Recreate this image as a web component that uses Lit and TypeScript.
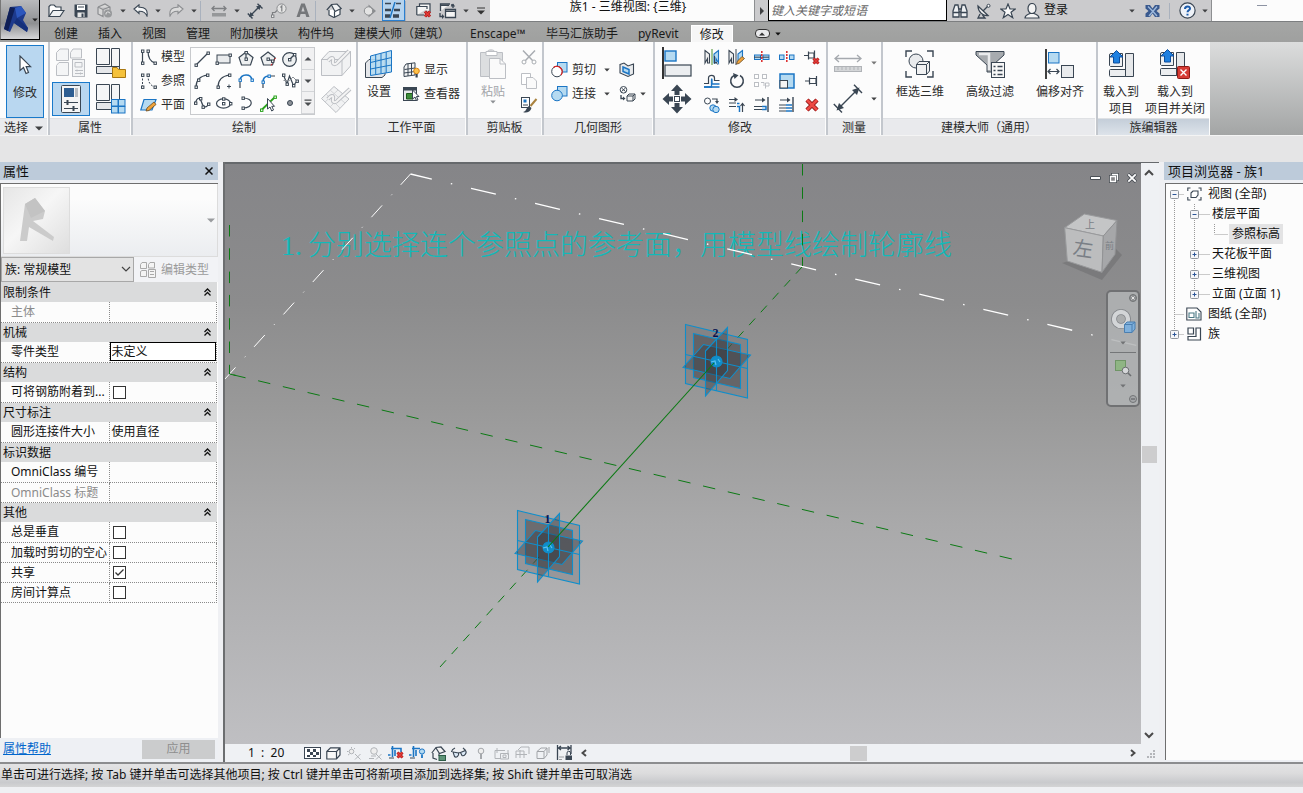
import { LitElement, html, svg, css, nothing, TemplateResult, SVGTemplateResult } from "lit";
import { customElement, state } from "lit/decorators.js";
import { classMap } from "lit/directives/class-map.js";

type Glyph = [number, number, SVGTemplateResult];

const K = "#3a4653";
const G = "#bcbfc4";
const B = "#1b75c4";
const L = "#b5daf1";

const sq = (x: number, y: number, c = K) =>
  svg`<rect x=${x - 1} y=${y - 1} width="2.4" height="2.4" fill="#fff" stroke=${c} stroke-width="1"/>`;

const ln = (d: string, c = K, w = 1.2, fill = "none") =>
  svg`<path d=${d} stroke=${c} stroke-width=${w} fill=${fill}/>`;

const cross = (x: number, y: number, s: number) => svg`
  <path d="M${x} ${y}l${s} ${s}M${x + s} ${y}l${-s} ${s}" stroke="#a31515" stroke-width="3"/>
  <path d="M${x} ${y}l${s} ${s}M${x + s} ${y}l${-s} ${s}" stroke="#e33a36" stroke-width="1.6"/>`;

const loadBox = svg`
  <rect x="1.5" y="19.5" width="24" height="7" rx="1" fill="#eceef0" stroke=${K}/>
  <path d="M1.500 15.500V5Q1.500 3.500 3 3.500H14.500V16.500H2.500Z" fill="#eef0f2" stroke=${K}/>
  <path d="M17.500 3.500H25.500V26.500H17.500Z" fill="#e6e8ea" stroke=${K}/>
  <path d="M8.500 0.500L15 7H11.500V13H5.500V7H2Z" fill="#1e80e0" stroke="#0c4d9c"/>`;

const sheetFamilies = svg`
  <path d="M0.500 0.500H13.500V16.500H0.500ZM15.500 0.500H23.500V19.500H15.500Z" fill="#f4f5f6" stroke=${K}/>
  <path d="M0.500 18.500H23.500V25.500H0.500Z" fill="#e5e7ea" stroke=${K}/>`;

const ICONS: Record<string, Glyph> = {
  open: [17, 14, svg`${ln("M1 12.500V2.500L2.500 1H6L8 3H13V6", K, 1.2, "#fff")}${ln("M1 12.500L5 6.500H16L12 12.500Z", K, 1.2, "#eef0f2")}`],
  save: [14, 14, svg`<path d="M0.500 0.500H13.500V13.500H2L0.500 12Z" fill=${K}/><rect x="3" y="1" width="8" height="5" fill="#fff"/><path d="M4 3h6" stroke=${K}/><rect x="3.500" y="8.500" width="7" height="4.500" fill="#e8e8e8"/><rect x="7.500" y="9.500" width="2" height="3.500" fill=${K}/>`],
  sync: [16, 15, svg`${ln("M1 4L8 1L13 4V7M1 4V11L6 13.500V6.500L13 4M1 4L6 6.500", "#8b8d90", 1.2, "#d6d6d6")}<circle cx="11" cy="10.500" r="4" fill="#97999b"/>${ln("M9 11.500a2 2 0 1 1 4 -1", "#e4e4e4", 1)}`],
  undo: [16, 13, svg`<path d="M1 5L6 0.800V3.300C12 3 15 5.500 14 12C12.500 8.500 10 7 6 7.200V9.500Z" fill="#f6f7f8" stroke=${K} stroke-width="1.100"/>`],
  redo: [16, 13, svg`<path d="M15 5L10 0.800V3.300C4 3 1 5.500 2 12C3.500 8.500 6 7 10 7.200V9.500Z" fill="#dcdcdc" stroke="#8b8d90" stroke-width="1.100"/>`],
  measureQ: [16, 12, svg`${ln("M1 3.500H15M3.500 1L1 3.500L3.500 6M12.500 1L15 3.500L12.500 6", "#7d7f82", 1.3)}<rect x="1" y="8" width="14" height="3.500" fill="#96989a"/>`],
  dim: [16, 16, svg`${ln("M3 13L13 3M0.800 10.500L5.500 15.500M10.500 0.800L15.500 5.500", K, 1.4)}<path d="M2 14L7 12.500L3.500 9ZM14 2L9 3.500L12.500 7Z" fill=${K}/>`],
  tag: [16, 15, svg`<circle cx="10.500" cy="5.500" r="4.600" fill="#e3e3e3" stroke="#8b8d90"/>${ln("M9.500 4.500L10.800 3V8.500M1.500 13V9.500H4L6 7.500", "#7d7f82", 1.2)}${sq(1.5, 13, "#7d7f82")}`],
  textA: [14, 15, svg`<path d="M0.500 14L5.200 0.500H8.800L13.500 14H10.300L9.400 11H4.600L3.700 14ZM5.400 8.500H8.600L7 3.500Z" fill="#75777a" fill-rule="evenodd"/>`],
  home: [16, 15, svg`${ln("M3 7V12L8 14.500L14 11.500V6", K, 1.2, "#fff")}${ln("M0.800 7L5.500 1.500L11 1L15.200 5.500L9 8.500L5.500 2", K, 1.2, "#f1f2f3")}${ln("M8.500 8.500V14", K)}`],
  section: [14, 14, svg`<circle cx="5.500" cy="7" r="4.200" fill="#e3e3e3" stroke="#8b8d90"/><path d="M5.500 0.500L13 7L5.500 13.500V11.200a4.200 4.200 0 0 0 0 -8.400Z" fill="#8b8d90"/>`],
  thin: [18, 16, svg`<path d="M1 1.500H7M12 1.500H17" stroke=${K} stroke-width="1.600"/><path d="M1 8H7M10 8H16" stroke=${K} stroke-width="2.600"/><path d="M1 14H6M9 14H15" stroke=${K} stroke-width="3.600"/><path d="M11 0L6 16" stroke=${B} stroke-width="1.400"/>`],
  closeWin: [16, 15, svg`${ln("M3.500 3V0.800H14V9M0.800 12V3.500H11V6M0.800 12H8", K, 1.2, "#f5f5f5")}${cross(9, 8.5, 5)}`],
  switchWin: [18, 16, svg`${ln("M1.500 8V1H11M6.500 6.500H16.500V14.500H6.500Z", K, 1.3, "#f5f5f5")}${ln("M6.500 8.200H16.500M1.500 2.200H10", K, 1.6)}${ln("M14 5V2H12M1 10V13.500H4", K, 1.3)}<path d="M11.800 3.500L14 0.500L16.200 3.500ZM3 11L5.500 13.500L3 16Z" fill=${K}/>`],
  binoc: [16, 16, svg`${ln("M1 8L3 2H6L7 8V14H1ZM15 8L13 2H10L9 8V14H15Z", K, 1.3, "#eef0f2")}${ln("M7 6H9M7 9H9M1 9.500H7M9 9.500H15", K, 1.3)}`],
  dish: [16, 16, svg`${ln("M2 3C2 9 7 13 12 12.500Z", K, 1.3, "#f4f4f4")}${ln("M7 8L12 3M4 11L2 15H9L6.500 12", K, 1.3)}<circle cx="12.500" cy="2.800" r="1.500" fill="#fff" stroke=${K}/>`],
  star: [16, 16, svg`${ln("M8 1L10 6H15.200L11 9.300L12.700 14.700L8 11.400L3.300 14.700L5 9.300L0.800 6H6Z", K, 1.2, "#f9f9f9")}`],
  user: [16, 16, svg`<ellipse cx="8" cy="5.500" rx="4" ry="5" fill="#f4f4f4" stroke=${K} stroke-width="1.200"/>${ln("M1 15C1 12 4 11.500 6 10.500H10C12 11.500 15 12 15 15Z", K, 1.2, "#f4f4f4")}`],
  exchange: [15, 14, svg`<path d="M0.500 1H5L7.500 4.500L10 1H14.500V4.500L11.500 7L14.500 9.500V13H10L7.500 9.500L5 13H0.500V9.500L3.500 7L0.500 4.500Z" fill="#39598e"/><path d="M3 2.500L8 7.500L12 12M12 2.500L4 12" stroke="#9db9dc" stroke-width="1.400"/>`],
  help: [17, 17, svg`<circle cx="8.500" cy="8.500" r="7.600" fill="#eef2f8" stroke=${K} stroke-width="1.200"/>${ln("M6 7C6 3.500 11.300 3.700 11 6.700C10.800 8.300 8.500 8.400 8.500 10.300M8.500 11.800V13.500", "#1d5caa", 2)}`],
  cursor: [13, 20, svg`<path d="M1 1V15.500L4.500 12.500L7 18.500L9.500 17.500L7.200 11.700H11.700Z" fill="#fff" stroke=${K} stroke-width="1.200"/>`],
  typeProps: [30, 30, svg`<g fill="#f4f5f6" stroke=${G}><path d="M0.500 4.500L4 1H12.500V12.500H0.500ZM14.500 4.500L17 1H25.500V10H14.500ZM0.500 17.500L3 14.500H12.500V27.500H0.500Z"/><rect x="16.500" y="11.500" width="12" height="17"/><path d="M19 14.500H26V19H19ZM19 22.500H27M19 25.500H27M21 21.500v2M24.500 24.500v2"/></g>`],
  famTypes: [30, 30, svg`${sheetFamilies}<path d="M16.500 19.500H21L22.500 21.500H29.500V29.500H16.500Z" fill="#f5c23c" stroke="#a97812"/>`],
  props: [20, 28, svg`<rect x="0.500" y="0.500" width="19" height="27" rx="1" fill="#f5f5f5" stroke=${K}/><rect x="3" y="3" width="10" height="9" fill="#2e5e92"/><rect x="14" y="3" width="3" height="9" fill="#b9bdc2"/><path d="M3 17.500H17M3 23.500H17" stroke=${K}/><path d="M6.500 15V20M12.500 21V26" stroke=${K} stroke-width="2"/>`],
  famCat: [30, 30, svg`${sheetFamilies}<g fill=${L} stroke=${B}><rect x="15.500" y="15.500" width="6.500" height="6.500"/><rect x="22.500" y="15.500" width="6.500" height="6.500"/><rect x="15.500" y="22.500" width="6.500" height="6.500"/><rect x="22.500" y="22.500" width="6.500" height="6.500"/></g>`],
  modelLine: [17, 16, svg`${ln("M2.500 2V14M8 2C8 9 10 12.500 15 14", K)}${sq(2.5, 2)}${sq(2.5, 14)}${sq(8, 2)}${sq(15, 14)}`],
  refLine: [17, 16, svg`<path d="M2.500 2V14M8 2C8 9 10 12.500 15 14" fill="none" stroke=${K} stroke-dasharray="2 1.500"/>${sq(2.5, 2)}${sq(2.5, 14)}${sq(8, 2)}${sq(15, 14)}`],
  refPlane: [17, 16, svg`${ln("M4 2.500H16L12 13H0.800Z", B, 1.2, L)}<path d="M6 14L7 11L14 5L16 7.500L9 13.500Z" fill="#f0a33a" stroke="#6b4a20" stroke-width="0.800"/>`],
  dLine: [18, 18, svg`${ln("M3 15L15 3")}${sq(3, 15)}${sq(15, 3)}`],
  dRect: [18, 18, svg`<rect x="2" y="5" width="13" height="8" fill="#e9ebed" stroke=${K}/>${sq(2, 13)}${sq(15, 5)}`],
  dPoly: [18, 18, svg`${ln("M9 2L16 7.500L13.500 15H4.500L2 7.500Z", K, 1.2, "#eef0f1")}${ln("M9 3V9")}${sq(9, 9)}${sq(9, 2.5)}`],
  dPolyC: [18, 18, svg`${ln("M9 2L16 7.500L13.500 15H4.500L2 7.500Z", K, 1.2, "#eef0f1")}<path d="M14 12L16.500 8M12 15.500L14.500 11" stroke="#e02020" stroke-dasharray="2 1"/>${ln("M9 9L13.500 11")}${sq(9, 9)}${sq(13.5, 11)}`],
  dCircle: [18, 18, svg`<circle cx="8.500" cy="9.500" r="6.800" fill="#eef0f1" stroke=${K} stroke-width="1.200"/>${ln("M9 9L13 5")}${sq(8.5, 9.5)}${sq(13.5, 4.5)}`],
  dArc1: [18, 18, svg`${ln("M3 15C3 8 7 4 14.500 3")}${sq(3, 15)}${sq(5.5, 8)}${sq(14.5, 3)}`],
  dArc2: [18, 18, svg`${ln("M3 15C3 8 7 4 14.500 3")}${sq(3, 15)}${sq(14.5, 3)}${ln("M12 14.500h4M14 12.500v4", K, 1)}`],
  dArc3: [18, 18, svg`${ln("M3 8C4 1.500 14 1 15 8", B, 1.6)}${ln("M3 10V16")}${sq(3, 8, B)}${sq(15, 8, B)}`],
  dArc4: [18, 18, svg`${ln("M4 10C4 6 6 4 10 4", B, 1.6)}${ln("M4 12V16M12 4H16")}${sq(4, 10, B)}${sq(10, 4, B)}`],
  dSpline: [18, 18, svg`${ln("M2.500 3L6 12L8.500 4L12.500 13.500L16 9")}${ln("M2.500 8.500H8.500L12 5L16 9", "#8d9298", 1)}${sq(2.5, 3)}${sq(6, 12)}${sq(12.5, 13.5)}${sq(16, 9)}`],
  dSpline2: [18, 18, svg`${ln("M2.500 9C4 3 7 3 8.500 8S13 15 15.500 10")}${sq(2.5, 9)}${sq(7.5, 4.5)}${sq(10, 13)}${sq(15.5, 10)}`],
  dEllipse: [18, 18, svg`<ellipse cx="8.500" cy="9.500" rx="7" ry="4.600" fill="#fff" stroke=${K} stroke-width="1.200"/>${sq(8.5, 9.5)}${sq(8.5, 4.8)}${sq(15.5, 9.5)}`],
  dEllipse2: [18, 18, svg`${ln("M6 4C17 4 17 14 6 14")}${sq(6, 4)}${sq(6, 14)}`],
  dPick: [18, 18, svg`${ln("M2.500 16L16 3", "#2aa31c", 1.8)}${sq(2.5, 16, "#2aa31c")}${sq(16, 3, "#2aa31c")}<path d="M8.500 4.500V15L11 13L12.700 17L14.500 16L12.800 12.300H15.500Z" fill="#fff" stroke=${K}/>`],
  dPoint: [18, 18, svg`<circle cx="9" cy="9" r="2.500" fill="#8d9298" stroke=${K}/>`],
  faceDraw: [32, 30, svg`<path d="M1.500 11.500L9 3.500H30.500L22 11.500ZM1.500 11.500H22V27.500H1.500ZM22 11.500L30.500 3.500V18L22 27.500" fill="#f1f2f3" stroke=${G}/><path d="M8 13C11 9 14 9 13 13S16 17 18 14L29 3" fill="none" stroke=${G} stroke-width="4"/><path d="M8 13C11 9 14 9 13 13S16 17 18 14L29 3" fill="none" stroke="#f4f4f4" stroke-width="2"/>`],
  planeDraw: [32, 30, svg`<path d="M1.500 14.500L14 2.500L29 15L16 28.500Z" fill="#f1f2f3" stroke=${G}/><path d="M6 10L20 24M10 6L25 19M10 23L23 10M5 18L18 6" stroke="#d3d5d8"/><path d="M8 15C11 11 14 11 13 15S16 19 18 16L30 5" fill="none" stroke=${G} stroke-width="4"/><path d="M8 15C11 11 14 11 13 15S16 19 18 16L30 5" fill="none" stroke="#f4f4f4" stroke-width="2"/>`],
  setPlane: [28, 30, svg`<path d="M0.500 14L4 10.500H20V26L17 28.500H0.500Z" fill="#e4e6e9" stroke=${K}/><path d="M5.500 7L26.500 1.500V23L5.500 26.500Z" fill=${L} fill-opacity="0.900" stroke=${B}/><path d="M5.500 13.500L26.500 8.500M5.500 20L26.500 16M10.700 5.700V25.600M16 4.300V24.700M21.200 3V23.900" stroke=${B}/>`],
  showPlane: [17, 16, svg`${ln("M3 2L12 0.800V13L1 14.500V5Z", K, 1, "#f2f3f4")}${ln("M1.500 7.500L12 6M1 11L12 9.500M5 1.500V14M8.500 1V13.500", K, 1)}<circle cx="13.500" cy="9" r="2.800" fill="#ffc24a" stroke="#d98413"/><rect x="12.500" y="12" width="2.200" height="3.500" fill=${K}/>`],
  viewer: [17, 16, svg`<rect x="0.500" y="1.500" width="13" height="13" fill="#e8eaec" stroke=${K}/><path d="M0.500 3H14" stroke=${K} stroke-width="3"/><path d="M3.500 7.500H10V13H3.500Z" fill="#3e8d3a" stroke="#1e5c1b"/><path d="M9.500 4V13L12 11L13.500 14.500L15 14L13.500 10.500H16Z" fill="#fff" stroke=${K}/>`],
  paste: [27, 32, svg`<path d="M0.500 4.500H7C7 1 15 1 15 4.500H22.500V28.500H0.500Z" fill="#dcdee0" stroke=${G}/><path d="M6 3.500H17V7.500H6Z" fill="#fff" stroke=${G}/><path d="M9.500 10.500H20L25.500 16V30.500H9.500Z" fill="#fafafa" stroke=${G}/><path d="M20 10.500V16H25.500" fill="none" stroke=${G}/>`],
  cut: [16, 16, svg`${ln("M2 1.500L12 12M14 1.500L4 12", "#a9adb2", 1.5)}<circle cx="3" cy="13" r="2" fill="#fff" stroke="#a9adb2"/><circle cx="13" cy="13" r="2" fill="#fff" stroke="#a9adb2"/>`],
  copy: [16, 16, svg`<path d="M0.500 0.500H9.500V11.500H0.500Z" fill="#fff" stroke=${G}/><path d="M5.500 4.500H12L15.500 8V15.500H5.500Z" fill="#fafafa" stroke=${G}/>`],
  match: [17, 16, svg`<rect x="0.500" y="0.500" width="8" height="10" fill="#fff" stroke=${K}/><rect x="2.500" y="2.500" width="3" height="3" fill=${B}/><path d="M2 8h5" stroke=${K}/><path d="M15.500 2L9.500 9" stroke="#a9823e" stroke-width="2"/><path d="M2 15C5 15 5 11 8 9L10.500 11C9.500 15 5 16.500 2 15Z" fill=${K}/>`],
  cutGeo: [17, 16, svg`<rect x="6.500" y="0.500" width="9.500" height="9.500" fill=${L} stroke=${B}/><circle cx="6" cy="9.500" r="5.300" fill="#fff" stroke=${K}/><path d="M2.500 5.600A5.300 5.300 0 0 1 10 13" fill="none" stroke="#d22" stroke-width="1.300"/>`],
  joinGeo: [17, 16, svg`<rect x="6.500" y="0.500" width="9.500" height="9.500" fill=${L} stroke=${B}/><circle cx="6" cy="9.500" r="5.300" fill=${L} stroke=${B}/><path d="M7 5.500V9H10.500" fill="none" stroke=${L} stroke-width="1.500"/>`],
  paintGeo: [16, 16, svg`${ln("M1 2.500L5 1L9 4L14.500 2V12L9 14.500L1 11Z", K, 1.1, "#e9ebed")}<path d="M4 5L10 7.500V12L4 9.500Z" fill=${L} stroke=${B} stroke-width="1.500"/>`],
  demolish: [17, 16, svg`<circle cx="4.500" cy="3.800" r="3.300" fill="#fff" stroke=${K}/>${ln("M2.500 2L6.500 5.500M6.500 2L2.500 5.500", K, 1)}${ln("M8 10L10 8H16V13L14 15H8ZM8 10H14V15M14 10L16 8", K, 1, "#f4f4f4")}${ln("M2 9V12.500H5", K, 1.3)}<path d="M4 10.500L6.500 12.500L4 14.500Z" fill=${K}/>`],
  align: [30, 32, svg`<path d="M1 0V32" stroke="#000" stroke-width="1.600"/><rect x="3" y="4" width="11" height="10" fill=${L} stroke=${B} stroke-width="1.400"/><rect x="3" y="18" width="26" height="11" fill="#eceef0" stroke=${K} stroke-width="1.200"/>`],
  move: [30, 30, svg`<path d="M15 0.500L21 7H17.500V11H12.500V7H9ZM15 29.500L21 23H17.500V19H12.500V23H9ZM0.500 15L7 9V12.500H11V17.500H7V21ZM29.500 15L23 9V12.500H19V17.500H23V21Z" fill=${K}/><rect x="12.500" y="12.500" width="5" height="5" fill="#fff" stroke=${K}/>`],
  mirrorP: [16, 16, svg`${ln("M1 1.500L5.500 5V14H3.500V9.500L1 14Z", K, 1.1, "#f2f2f2")}${ln("M8 0V16", "#63a24d", 1.2)}${ln("M14.500 1.500L10 5V14H12V9.500L14.500 14Z", B, 1.1, L)}${ln("M10.500 7V14.500L12.200 13L13.500 15.500", K, 1)}`],
  mirrorD: [17, 16, svg`${ln("M1 1.500L5.500 5V14H3.500V9.500L1 14Z", K, 1.1, "#f2f2f2")}${ln("M8 0V16", K, 1)}${ln("M14.500 1.500L10 5V12H12L14.500 9Z", B, 1.1, L)}<path d="M8.500 15L9.500 12L14 7.500L16.500 9.500L11 14.500Z" fill="#f0a33a" stroke="#6b4a20" stroke-width="0.800"/>`],
  split: [16, 16, svg`<rect x="0.500" y="6" width="6" height="4.500" fill=${L} stroke=${B}/><rect x="9" y="6" width="6" height="4.500" fill=${L} stroke=${B}/><path d="M0 8.200H15" stroke=${K}/><path d="M7.800 2V14" stroke="#d33" stroke-width="1.600" stroke-dasharray="2 1"/>`],
  splitGap: [16, 16, svg`<rect x="0.500" y="6" width="4.500" height="4.500" fill=${L} stroke=${B}/><rect x="10.500" y="6" width="4.500" height="4.500" fill=${L} stroke=${B}/><path d="M7.800 2V14" stroke="#d33" stroke-width="1.600" stroke-dasharray="2 1"/>`],
  unpin: [16, 16, svg`${ln("M0 6.500H4M4.500 2.500V10.500M5 4H10V9H5M10.500 1.500V11", K, 1.2)}${cross(9.5, 9.5, 5)}`],
  offset: [17, 16, svg`${ln("M1 10.500H5.500V5C5.500 1.500 11.500 1.500 11.500 5V7.500H16.500", K, 1.2)}${ln("M1 14H8.500V7C8.500 5.500 9 5.500 9 7V11H16.500", B, 1.3)}${ln("M1 14H16.500", B, 1.6)}`],
  rotate: [16, 16, svg`<path d="M5 2.500A6.300 6.300 0 1 0 11 2.500" fill="none" stroke=${K} stroke-width="1.500"/><path d="M4 0L9.500 2.300L5.500 6Z" fill=${K}/>`],
  array: [16, 16, svg`<g fill="#fff" stroke=${G}><rect x="0.500" y="1.500" width="4" height="4"/><rect x="8.500" y="1.500" width="4" height="4"/><rect x="0.500" y="9.500" width="4" height="4"/><path d="M7 9.500H10V13M11.500 15.500V10H15V13H11.500"/></g>`],
  scale: [16, 16, svg`<rect x="1" y="1" width="14" height="14" fill=${L} stroke=${B} stroke-width="1.500"/><rect x="1" y="7.500" width="7.500" height="7.500" fill="#f4f4f4" stroke=${K}/>`],
  pin: [16, 16, svg`${ln("M1 8H5M5.500 4.500V11.500M6 5.500H12V10.500H6M12.500 3V13", K, 1.2)}`],
  copyObj: [16, 16, svg`<circle cx="3.500" cy="4" r="3" fill="#fff" stroke=${K}/><circle cx="9" cy="11" r="3.200" fill=${L} stroke=${B}/><circle cx="12" cy="12.500" r="3.200" fill=${L} stroke=${B}/>${ln("M8 2H13V4.500", K, 1.2)}<path d="M11 4L15 4L13 7Z" fill=${K}/>`],
  trim: [16, 16, svg`${ln("M0 2.500H7M0 6H7M0 9.500H7", K, 1.2)}<path d="M5.500 0L9 2.500L5.500 5Z" fill=${K}/>${ln("M8 9.500H10.500V15M8 6.500H10.500", B, 1.5)}${ln("M13.500 15V7M11.500 9L13.500 6.500L15.500 9", K, 1.2)}`],
  trimOne: [16, 16, svg`${ln("M1 3H10M0 9.500H8M0 12.500H8", K, 1.2)}<path d="M8 0.500L11.500 3L8 5.500Z" fill=${K}/>${ln("M8 9.500H12V12.500H8", B, 1.5)}${ln("M14 0V15", K, 1.4)}`],
  trimMany: [16, 16, svg`${ln("M1 3H10M0 8H7M0 11H7M0 14H7", K, 1.2)}<path d="M8 0.500L11.500 3L8 5.500Z" fill=${K}/>${ln("M7 8H13M7 11H13M7 14H13", B, 1.5)}${ln("M14 0V15", K, 1.4)}`],
  del: [14, 14, svg`<path d="M2 2L12 12M12 2L2 12" stroke="#8e1414" stroke-width="4.500"/><path d="M2 2L12 12M12 2L2 12" stroke="#ee4a45" stroke-width="2.800"/>`],
  ruler: [30, 22, svg`${ln("M2 6.500H28M6 3L2 6.500L6 10M24 3L28 6.500L24 10", "#a5a9ae", 1.3)}<rect x="1.500" y="14.500" width="27" height="5" fill="#d4d6d8" stroke="#b0b3b7"/><path d="M5 15v3M9 15v3M13 15v3M17 15v3M21 15v3M25 15v3" stroke="#b0b3b7"/>`],
  dimBig: [30, 30, svg`${ln("M5 25L25 5M0.800 20L9 28.500M21 0.800L29 9", K, 1.4)}<path d="M3.500 26.500L11 24L6 19ZM26.500 3.500L19 6L24 11Z" fill=${K}/>`],
  box3d: [30, 28, svg`${ln("M1 7V1H7M22 1H28V7M28 21V27H22M7 27H1V21", K, 1.4)}<circle cx="11" cy="11" r="7" fill="#e9ebed" stroke=${K}/><path d="M11.500 14.500L14 11.500H24.500V21L21.500 24.500H11.500ZM11.500 14.500H21.500V24.500M21.500 14.500L24.500 11.500" fill="#f0f1f2" stroke=${K}/>`],
  filter: [30, 28, svg`<path d="M1 1.500H29V5L18 15V22H12V15L1 5Z" fill="#a7abaf" stroke=${K}/><path d="M4 4H14V20" fill="none" stroke="#e9ebed" stroke-width="2.500"/><rect x="16.500" y="12.500" width="13" height="15" fill="#f7f7f7" stroke=${K}/>${ln("M18.500 16.500h2M18.500 20.500h2M18.500 24.500h2M22.500 16.500h5M22.500 20.500h5M22.500 24.500h5", K, 1.3)}`],
  offAlign: [30, 30, svg`<path d="M1 0V30" stroke="#000" stroke-width="1.500"/><rect x="3.500" y="3.500" width="10.500" height="10.500" fill=${L} stroke=${B}/><rect x="16.500" y="16.500" width="12" height="12" fill="#e9ebed" stroke=${K}/>${ln("M3 22.500H14M5.500 20L3 22.500L5.500 25M11.500 20L14 22.500L11.500 25", K, 1.2)}`],
  load: [27, 28, loadBox],
  loadClose: [32, 31, svg`${loadBox}<rect x="18.500" y="17.500" width="12" height="12" rx="1" fill="#d63b34" stroke="#8c1a16"/><path d="M21.500 20.500l6 6M27.500 20.500l-6 6" stroke="#fff" stroke-width="1.400"/>`],
  editType: [16, 16, svg`<g fill="#f4f4f4" stroke="#a9a9a9"><path d="M0.500 2.500L2 0.500H6.500V6.500H0.500ZM8.500 2.500L10 0.500H14.500V6H8.500ZM0.500 9.500L2 8.500H6.500V14.500H0.500Z"/><path d="M8.500 7.500H15.500V15.500H8.500ZM10 9.500H14M10 12.500H14"/></g>`],
  vDetail: [17, 12, svg`<rect x="0.500" y="0.500" width="16" height="11" fill="#fff" stroke=${K}/><path d="M3 2h3v3H3ZM9 2h3v3H9ZM6 5h3v3H6ZM12 5h3v3H12ZM3 8h3v2H3ZM9 8h3v2H9Z" fill=${K}/>`],
  vStyle: [15, 13, svg`${ln("M0.800 4.500L4.500 0.800H14V8L10.500 12H0.800ZM0.800 4.500H10.500V12M10.500 4.500L14 0.800", K, 1.2, "#f8f8f8")}`],
  vSun: [15, 13, svg`<g stroke="#b1b4b8"><circle cx="4.500" cy="4.500" r="2.300" fill="#eee"/><path d="M4.500 0V1.500M0 4.500H1.500M1 8L2.500 7M8 1L7 2M8 7L13.500 12.500M13.500 7L8 12.500"/></g>`],
  vShadow: [15, 13, svg`<g stroke="#b1b4b8"><circle cx="6" cy="4" r="3.300" fill="#eee"/><path d="M1 11.500H6M3 9H8M8 7L13.500 12.500M13.500 7L8 12.500" fill="none"/></g>`],
  vCrop: [17, 14, svg`${ln("M4.500 0V11M0 9H2.500M3 2.500H13V6M7 4V10M13 3V5", B, 1.6)}<path d="M1 12h5" stroke=${K}/>${cross(9.5, 6.5, 5)}`],
  vCropShow: [17, 14, svg`${ln("M4.500 0V11M0 9H2.500M3 2.500H11M7 4V10", B, 1.6)}<path d="M1 12h5" stroke=${K}/><circle cx="13" cy="5.500" r="2.600" fill=${L} stroke=${B}/><path d="M13 8.500V12" stroke=${B} stroke-width="1.800"/>`],
  vLock: [16, 15, svg`${ln("M2 7V12L6 13.500M0.800 7L5 1.500L10 1L14 5.500L8.500 7.500L5 2M8 7.500V10", K, 1.2, "#f3f3f3")}<rect x="8" y="9.500" width="6.500" height="5" fill="#5e9478" stroke="#2c5c46"/>`],
  vGlasses: [17, 12, svg`<path d="M2 5L7.500 6C8.500 9 5 11 3.500 9.500ZM9.500 5.500L14.500 3.500C16.500 6 13 9.500 11 8.500Z" fill="#dbe9f6" stroke=${K} stroke-width="1.100"/>${ln("M0.500 5C1 2 3 1.500 4 1M7.500 6L9.500 5.500M14.500 3.500L12 0.800", K, 1.2)}`],
  vBulb: [8, 13, svg`<circle cx="4" cy="4" r="2.800" fill="#eee" stroke="#a5a8ac"/><path d="M4 7V12" stroke="#a5a8ac" stroke-width="2"/>`],
  vTemp: [16, 13, svg`<path d="M1 3.500H11M1 3.500V11.500H6M3 1V6M14 3V8M6.500 6.500H14.500V12H6.500ZM9 8h3v2.500H9Z" fill="none" stroke="#b1b4b8"/>`],
  vAnalytic: [16, 14, svg`<path d="M3 4L6 1H14V8M1 12V5H9V12M1 8.500H12M5 4V12" fill="none" stroke="#b1b4b8"/>`],
  vDisp: [16, 14, svg`<path d="M1 5.500L5 2H11M1 5.500V12.500H8V5.500H1M8 5.500L11 2V9L8 12.500M13 1V7" fill="none" stroke="#a1a4a8"/>`],
  vConstr: [17, 16, svg`${ln("M1.500 0V15M15 0V9M3 3H13.500M5 1L2.500 3L5 5M11.500 1L14 3L11.500 5", K, 1.3)}<rect x="9.500" y="10.500" width="6.500" height="4.500" fill=${K}/><path d="M11 10V8a1.700 1.700 0 0 1 3.500 0V10" fill="none" stroke=${K}/><path d="M3 12h5M3 14.500h3" stroke="#9a9da1"/>`],
  views: [15, 14, svg`${ln("M0.800 4V1H3.500M11.500 1H14V4M14 10V13H11.500M3.500 13H0.800V10", K, 1.1)}${ln("M4 6L6 4H11V8L9 10.500H4Z", K, 1.1, "#fff")}`],
  sheets: [16, 14, svg`${ln("M0.800 1H11L15 5V13H0.800Z", K, 1.1, "#fff")}${ln("M3 10.500V6H8V10.500ZM10 4V11H13V6", "#4d7a86", 1.1)}`],
  families: [15, 14, svg`${ln("M1 1H6.500V7H1ZM9 1H13.500V13H1V9.500H9Z", K, 1.2, "#fff")}`],
  resize: [8, 8, svg`<path d="M6 0h2v2H6ZM3 3h2v2H3ZM6 3h2v2H6ZM0 6h2v2H0ZM3 6h2v2H3ZM6 6h2v2H6Z" fill="#b4b6ba"/>`],
  logo: [26, 27, svg`<path d="M7 1L18 0L23 7L20 14L25 22L24 26L11 17L7 26L1 23Z" fill="#1d3a8c"/><path d="M7 1L12 2L5 25L1 23Z" fill="#0f1f55"/><path d="M12 2L18 0L23 7L14 12Z" fill="#2c57bd"/><path d="M11 17L14 12L25 22L24 26Z" fill="#15307a"/>`],
  logoPale: [36, 46, svg`<path d="M6 7L16 1L26 14L24 22L14 24L35 40L34 44L10 30L8 44L1 44Z" fill="#cbcbcb"/><path d="M6 7L16 1L26 14L12 21Z" fill="#c3c3c3"/>`],
};

const icon = (name: string) => {
  const [w, h, body] = ICONS[name];
  return html`<svg width=${w} height=${h} viewBox="0 0 ${w} ${h}" fill="none" aria-hidden="true">${body}</svg>`;
};

const down = (c = "#3f4042") =>
  html`<svg width="6" height="4" viewBox="0 0 6 4" aria-hidden="true"><path d="M0.300 0.500H5.700L3 3.600Z" fill=${c}/></svg>`;

const chevron = (d: string) =>
  html`<svg width="10" height="10" viewBox="0 0 10 10" fill="none" aria-hidden="true"><path d=${d} stroke="#4a4a4a" stroke-width="2"/></svg>`;

interface PropRow { name: string; kind: "text" | "edit" | "check"; value?: string; on?: boolean; dim?: boolean }
interface PropGroup { title: string; rows: PropRow[] }

const GROUPS: PropGroup[] = [
  { title: "限制条件", rows: [{ name: "主体", kind: "text", dim: true }] },
  { title: "机械", rows: [{ name: "零件类型", kind: "edit", value: "未定义" }] },
  { title: "结构", rows: [{ name: "可将钢筋附着到...", kind: "check" }] },
  { title: "尺寸标注", rows: [{ name: "圆形连接件大小", kind: "text", value: "使用直径" }] },
  { title: "标识数据", rows: [{ name: "OmniClass 编号", kind: "text" }, { name: "OmniClass 标题", kind: "text", dim: true }] },
  { title: "其他", rows: [
    { name: "总是垂直", kind: "check" },
    { name: "加载时剪切的空心", kind: "check" },
    { name: "共享", kind: "check", on: true },
    { name: "房间计算点", kind: "check" },
  ] },
];

const base = css`
  :host { display: block; box-sizing: border-box; }
  * { box-sizing: border-box; }
  button, input, select { font: inherit; color: inherit; margin: 0; }
  button { background: none; border: 0; padding: 0; display: flex; align-items: center; justify-content: center; white-space: nowrap; }
  svg { display: block; flex: none; }
`;

@customElement("title-bar")
class TitleBar extends LitElement {
  static styles = [base, css`
    :host { display: flex; background: linear-gradient(#9b9c9d, #a5a6a5 50%, #9fa09f); height: 42px; }
    .app { width: 40px; height: 40px; flex: none; border: 1px solid #000; border-left-color: #777; border-top: 0; background: linear-gradient(#b9babc, #8e9092 60%, #d5d6d8); gap: 3px; }
    .col { flex: 1; min-width: 0; }
    .top { display: flex; height: 22px; border-bottom: 1px solid #7c7e80; background: #fcfcfc; }
    .qat { display: flex; padding-left: 5px; background: #cbcbcd; width: 450px; flex: none; }
    .qat button { width: 24px; height: 21px; }
    .qat .drop { width: 12px; }
    .qat .sep { width: 7px; border-left: 1px solid #a9b1bd; margin-top: 1px; }
    .qat .on { background: #b5d3ee; border: 1px solid #2a7fd0; border-top: 0; }
    .qat .more { width: 18px; flex-direction: column; gap: 2px; }
    .name { flex: 1; text-align: center; line-height: 14px; padding-left: 12px; white-space: nowrap; }
    .info { display: flex; align-items: center; width: 458px; flex: none; background: #cbcbcd; border-left: 1px solid #8d8f91; border-right: 1px solid #8d8f91; }
    .info button { width: 24px; height: 21px; flex: none; }
    .info .go { width: 13px; }
    .info input { flex: 1; min-width: 0; height: 21px; border: 1px solid #000; border-top: 0; border-radius: 0; background: #fff; font-style: italic; padding: 0 2px; line-height: 18px; margin-right: 1px; }
    .info input::placeholder { color: #666; opacity: 1; }
    .info .login { width: 82px; justify-content: flex-start; padding-bottom: 1px; }
    .info .drop { width: 12px; }
    .info .drop.gap { margin-right: 2px; }
    .info .sep { width: 1px; height: 16px; background: #a9b1bd; margin: 0 5px; }
    .win { width: 91px; flex: none; display: flex; padding: 5px 0 0 45px; align-items: flex-start; }
    .win i { width: 10px; height: 1px; background: #8d93a3; }
    .tabs { display: flex; padding: 3px 0 0 4px; height: 20px; align-items: stretch; }
    .tabs button { padding: 0 10px; line-height: 17px; color: #1a1a1a; }
    .tabs .sel { background: #f6f6f6; padding: 0 8px; margin-left: 2px; border: 1px solid #fff; border-bottom: 0; }
    .tabs .fold { padding: 0; margin-left: 22px; gap: 5px; }
    .oval { width: 15px; height: 9px; border: 1px solid #333; border-radius: 4px; background: #e9eaec; display: flex; align-items: center; justify-content: center; }
  `];

  @state() private tab = "修改";

  render() {
    const b = (n: string, label: string, on = false) =>
      html`<button class=${classMap({ on })} aria-label=${label}>${icon(n)}</button>`;
    const d = (label: string) => html`<button class="drop" aria-label=${label}>${down()}</button>`;
    const sep = html`<span class="sep"></span>`;
    const tabs = ["创建", "插入", "视图", "管理", "附加模块", "构件坞", "建模大师（建筑）", "Enscape™", "毕马汇族助手", "pyRevit", "修改"];
    return html`
      <button class="app" aria-label="应用程序菜单">${icon("logo")}${down("#222")}</button>
      <div class="col">
        <div class="top">
          <div class="qat">
            ${b("open", "打开")}${b("save", "保存")}${b("sync", "同步")}${d("同步选项")}
            ${b("undo", "放弃")}${d("放弃列表")}${b("redo", "重做")}${d("重做列表")}${sep}
            ${b("measureQ", "测量")}${d("测量选项")}${b("dim", "对齐尺寸标注")}${b("tag", "标记")}${b("textA", "文字")}${sep}
            ${b("home", "默认三维视图")}${d("三维视图选项")}${b("section", "剖面")}${b("thin", "细线", true)}${sep}
            ${b("closeWin", "关闭隐藏窗口")}${b("switchWin", "切换窗口")}${d("窗口列表")}
            <button class="more" aria-label="自定义"><svg width="8" height="8" viewBox="0 0 8 8"><path d="M0 1H8" stroke="#333"/><path d="M0 3.500H8L4 7.500Z" fill="#333"/></svg></button>
          </div>
          <div class="name">族1 - 三维视图: {三维}</div>
          <div class="info">
            <button class="go" aria-label="展开搜索"><svg width="4" height="8" viewBox="0 0 4 8"><path d="M0 0L4 4L0 8Z" fill="#3f4042"/></svg></button>
            <input type="search" placeholder="键入关键字或短语" aria-label="搜索" />
            ${b("binoc", "搜索")}${b("dish", "通讯中心")}${b("star", "收藏夹")}${b("user", "用户")}
            <button class="login">登录</button>
            <button class="drop gap" aria-label="登录选项">${down()}</button>
            ${b("exchange", "Exchange")}<span class="sep"></span>${b("help", "帮助")}${d("帮助选项")}
          </div>
          <div class="win"><i></i></div>
        </div>
        <div class="tabs" role="tablist">
          ${tabs.map((t) => html`<button role="tab" class=${classMap({ sel: t === this.tab })} @click=${() => (this.tab = t)}>${t}</button>`)}
          <button class="fold" aria-label="最小化功能区"><span class="oval"><svg width="6" height="4" viewBox="0 0 6 4"><path d="M0 3.500L3 0.500L6 3.500Z" fill="#333"/></svg></span>${down("#111")}</button>
        </div>
      </div>`;
  }
}

@customElement("ribbon-bar")
class RibbonBar extends LitElement {
  static styles = [base, css`
    :host { display: flex; background: linear-gradient(#dcdddd, #a3a5a5); height: 94px; border-bottom: 1px solid #f4f4f4; color: #2c2c2c; overflow: hidden; }
    .panel { display: flex; flex-direction: column; flex: none; background: #fcfcfc; border-right: 2px solid #c3c7cd; }
    .body { flex: 1; display: flex; padding: 3px 0 0; align-items: flex-start; }
    .foot { height: 17px; line-height: 18px; text-align: center; background: #e9eaed; margin-right: 1px; border-top: 1px solid #dfe1e4; }
    .editor .foot { background: linear-gradient(#c4ced9, #dde3ea); }
    .foot button { width: 100%; gap: 7px; line-height: 18px; }
    .w0 { width: 50px; } .w1 { width: 83px; } .w2 { width: 225px; } .w3 { width: 110px; } .w4 { width: 76px; }
    .w5 { width: 111px; } .w6 { width: 173px; } .w7 { width: 55px; } .w8 { width: 215px; } .w9 { width: 112px; border-right: 0; }
    .w8 .body { padding-left: 2px; }
    .big { flex-direction: column; justify-content: flex-start; line-height: 17px; height: 73px; flex: none; }
    .big .pic { height: 38px; display: flex; align-items: center; justify-content: center; }
    .modify { width: 38px; margin-left: 6px; border: 1px solid #1979ca; background: #b9d7f0; }
    .c42 { width: 42px; } .c50 { width: 50px; } .c46 { width: 46px; } .c62 { width: 62px; } .c70 { width: 70px; }
    .quad { display: grid; grid-template-columns: 40px 40px; grid-template-rows: 36px 36px; padding-left: 1px; }
    .quad .on { border: 1px solid #1979ca; background: #b9d7f0; margin: 1px; }
    .rows { display: grid; grid-auto-rows: 24px; }
    .rows button { justify-content: flex-start; gap: 4px; }
    .mid { padding-top: 13px; }
    .w2 .rows { padding-left: 7px; }
    .w3 .rows, .w4 .rows { padding-left: 3px; }
    .w5 .geo { padding-left: 7px; }
    .w5 .geo2 { padding-left: 9px; }
    .gallery { display: grid; grid-template-columns: repeat(5, 22px) 13px; grid-auto-rows: 22px; border: 1px solid #c8cacd; margin: 2px 0 0 5px; background: #fdfdfd; }
    .gallery .step { background: #f1f1f2; border: 1px solid #d3d5d8; border-width: 0 0 1px 1px; }
    .stack { display: grid; grid-template-rows: 36px 36px; width: 42px; }
    .mv { width: 44px; }
    .ms { width: 40px; }
    .ar { width: 12px; }
    .pale { color: #a2a5a9; }
    .tools { display: grid; grid-template-columns: repeat(5, 25px); grid-auto-rows: 24px; }
  `];

  render() {
    const b = (n: string, label = n) => html`<button aria-label=${label}>${icon(n)}</button>`;
    const row = (n: string, t: string, arrow = false) =>
      html`<button>${icon(n)}<span>${t}</span>${arrow ? html`<span></span>${down()}` : nothing}</button>`;
    const big = (n: string, lines: string[], cls: string, w: TemplateResult | typeof nothing = nothing) =>
      html`<button class="big ${cls}"><span class="pic">${icon(n)}</span>${lines.map((l) => html`<span>${l}</span>`)}${w}</button>`;
    const panel = (i: number, title: unknown, body: TemplateResult) =>
      html`<section class="panel w${i} ${i === 9 ? "editor" : ""}"><div class="body">${body}</div><div class="foot">${title}</div></section>`;
    const step = (d: string, label: string) =>
      html`<button class="step" aria-label=${label}><svg width="8" height="8" viewBox="0 0 8 8"><path d=${d} fill="#4a4d50"/></svg></button>`;
    return html`
      ${panel(0, html`<button>选择 <svg width="8" height="5" viewBox="0 0 8 5"><path d="M0 0.500H8L4 4.500Z" fill="#3f4042"/></svg></button>`, big("cursor", ["修改"], "modify"))}
      ${panel(1, "属性", html`<div class="quad">${b("typeProps", "类型属性")}${b("famTypes", "族类别")}<button class="on" aria-label="属性">${icon("props")}</button>${b("famCat", "族类型")}</div>`)}
      ${panel(2, "绘制", html`
        <div class="rows">${row("modelLine", "模型")}${row("refLine", "参照")}${row("refPlane", "平面")}</div>
        <div class="gallery">
          ${["dLine", "dRect", "dPoly", "dPolyC", "dCircle"].map((n) => b(n))}${step("M0.500 5.500L4 2L7.500 5.500Z", "上")}
          ${["dArc1", "dArc2", "dArc3", "dArc4", "dSpline"].map((n) => b(n))}${step("M0.500 2.500L4 6L7.500 2.500Z", "下")}
          ${["dSpline2", "dEllipse", "dEllipse2", "dPick", "dPoint"].map((n) => b(n))}${step("M0.500 0.500h7v1.200h-7ZM0.500 3.500L4 7L7.500 3.500Z", "展开")}
        </div>
        <div class="stack">${b("faceDraw", "在面上绘制")}${b("planeDraw", "在工作平面上绘制")}</div>`)}
      ${panel(3, "工作平面", html`${big("setPlane", ["设置"], "c42")}<div class="rows mid">${row("showPlane", "显示")}${row("viewer", "查看器")}</div>`)}
      ${panel(4, "剪贴板", html`${big("paste", ["粘贴"], "c50 pale", html`${down("#8d9094")}`)}<div class="rows">${b("cut", "剪切")}${b("copy", "复制")}${b("match", "匹配类型")}</div>`)}
      ${panel(5, "几何图形", html`<div class="rows mid geo">${row("cutGeo", "剪切", true)}${row("joinGeo", "连接", true)}</div><div class="rows mid geo2">${b("paintGeo", "填色")}<button aria-label="拆除">${icon("demolish")}${down()}</button></div>`)}
      ${panel(6, "修改", html`<div class="stack mv">${b("align", "对齐")}${b("move", "移动")}</div>
        <div class="tools">${["mirrorP", "mirrorD", "split", "splitGap", "unpin", "offset", "rotate", "array", "scale", "pin", "copyObj", "trim", "trimOne", "trimMany", "del"].map((n) => b(n))}</div>`)}
      ${panel(7, "测量", html`<div class="stack ms">${b("ruler", "测量")}${b("dimBig", "尺寸标注")}</div><div class="stack ar"><button aria-label="测量选项">${down("#777")}</button><button aria-label="标注选项">${down()}</button></div>`)}
      ${panel(8, "建模大师（通用）", html`${big("box3d", ["框选三维"], "c70")}${big("filter", ["高级过滤"], "c70")}${big("offAlign", ["偏移对齐"], "c70")}`)}
      ${panel(9, "族编辑器", html`${big("load", ["载入到", "项目"], "c46")}${big("loadClose", ["载入到", "项目并关闭"], "c62")}`)}`;
  }
}

@customElement("property-palette")
class PropertyPalette extends LitElement {
  static styles = [base, css`
    :host { display: flex; flex-direction: column; background: #eef0f4; }
    header { display: flex; justify-content: space-between; align-items: center; background: #bdcbda; height: 18px; padding: 0 5px 0 3px; font-size: 13px; line-height: 18px; }
    .frame { flex: 1; display: flex; flex-direction: column; margin-top: 3px; border-top: 1px solid #6e6e6e; border-left: 1px solid #6e6e6e; background: #fcfcfc; }
    .type { display: flex; align-items: center; justify-content: space-between; height: 73px; padding: 2px; border-bottom: 1px solid #dcdcdc; border-right: 1px solid #dcdcdc; background: linear-gradient(#fcfcfc 20%, #ebedf0); width: 100%; }
    .thumb { width: 67px; height: 67px; border: 1px solid #ddd; background: linear-gradient(135deg, #e6e6e6, #f6f6f6 45%, #dedede); display: flex; align-items: center; justify-content: center; }
    .pick { display: flex; height: 25px; align-items: center; background: #f2f3f6; }
    .pick .sel { position: relative; width: 133px; height: 25px; }
    .pick select { appearance: none; width: 100%; height: 25px; border: 1px solid #a8a8a8; border-radius: 0; background: #e3e3e3; padding: 0 3px; }
    .pick .sel svg { position: absolute; right: 3px; top: 7px; pointer-events: none; }
    .pick .edit { color: #9b9b9b; gap: 5px; margin-left: 6px; }
    table { border-collapse: collapse; width: 216px; table-layout: fixed; }
    col.n { width: 108px; }
    tr { height: 20px; }
    th, td { padding: 0; font-weight: 400; text-align: left; line-height: 19px; height: 20px; white-space: nowrap; overflow: hidden; }
    .grp th { background: #dadbdc; padding-left: 2px; }
    .grp button { float: right; width: 16px; height: 18px; margin-right: 1px; }
    .row th, .row td { border-bottom: 1px dotted #8a8a8a; background: #fcfcfc; }
    .row th { padding-left: 10px; border-right: 1px dotted #8a8a8a; }
    .row td { padding-left: 2px; border-right: 1px dotted #8a8a8a; }
    .dim th { color: #8b8b8b; }
    .row td.box { padding: 0; }
    td input[type="text"] { display: block; width: 100%; height: 19px; border: 1px solid #000; padding: 0 1px; background: #fff; outline: 0; border-radius: 0; }
    td input[type="checkbox"] { appearance: none; display: block; width: 13px; height: 13px; margin: 1px 0 0 1px; border: 1px solid #333; background: #fff; }
    td input:checked { background: #fff url("data:image/svg+xml,%3Csvg xmlns='http://www.w3.org/2000/svg' viewBox='0 0 11 11'%3E%3Cpath d='M1.500 5.500L4 8L9.500 2.500' fill='none' stroke='%23333' stroke-width='1.300'/%3E%3C/svg%3E"); }
    footer { display: flex; justify-content: space-between; align-items: center; height: 24px; padding: 0 3px 2px; }
    footer a { color: #0066cc; }
    footer button { width: 73px; height: 19px; background: #cbcccd; color: #8e8e8e; }
  `];

  @state() private closed = new Set<string>();

  private toggle(t: string) {
    const next = new Set(this.closed);
    next.has(t) ? next.delete(t) : next.add(t);
    this.closed = next;
  }

  private value(r: PropRow) {
    if (r.kind === "check") return html`<td><input type="checkbox" aria-label=${r.name} .checked=${!!r.on} /></td>`;
    if (r.kind === "edit") return html`<td class="box"><input type="text" aria-label=${r.name} .value=${r.value ?? ""} /></td>`;
    return html`<td>${r.value ?? ""}</td>`;
  }

  render() {
    return html`
      <header><span>属性</span><button aria-label="关闭"><svg width="8" height="8" viewBox="0 0 8 8"><path d="M0.500 0.500L7.500 7.500M7.500 0.500L0.500 7.500" stroke="#111" stroke-width="1.500"/></svg></button></header>
      <div class="frame">
        <button class="type" aria-label="类型选择器"><span class="thumb">${icon("logoPale")}</span><svg width="8" height="5" viewBox="0 0 8 5"><path d="M0 0.500H8L4 4.500Z" fill="#9a9c9f"/></svg></button>
        <div class="pick">
          <div class="sel"><select aria-label="族"><option>族: 常规模型</option></select><svg width="10" height="10" viewBox="0 0 10 10" fill="none"><path d="M1 3L5 7L9 3" stroke="#444" stroke-width="1.200"/></svg></div>
          <button class="edit" disabled>${icon("editType")}编辑类型</button>
        </div>
        <table>
          <colgroup><col class="n" /><col /></colgroup>
          ${GROUPS.map((g) => html`<tbody>
            <tr class="grp"><th colspan="2">${g.title}<button aria-label="折叠" @click=${() => this.toggle(g.title)}><svg width="7" height="8" viewBox="0 0 7 8" fill="none"><path d="M0.500 4L3.500 1L6.500 4M0.500 7.500L3.500 4.500L6.500 7.500" stroke="#111" stroke-width="1.300"/></svg></button></th></tr>
            ${this.closed.has(g.title) ? nothing : g.rows.map((r) => html`<tr class=${classMap({ row: true, dim: !!r.dim })}><th>${r.name}</th>${this.value(r)}</tr>`)}
          </tbody>`)}
        </table>
      </div>
      <footer><a href="#help">属性帮助</a><button disabled>应用</button></footer>`;
  }
}

@customElement("model-view")
class ModelView extends LitElement {
  static styles = [base, css`
    :host { display: grid; grid-template-columns: 1fr 18px; grid-template-rows: 1fr 18px; background: #eff1f4; border-left: 2px solid #6c6e70; }
    .stage { position: relative; min-width: 0; border-top: 2px solid #66696c; background: linear-gradient(#858588, #8c8c8d 24%, #999999 42%, #a9a9aa 62%, #b3b3b5 80%, #bfbfc2); overflow: hidden; }
    .scene { position: absolute; inset: 0; width: 100%; height: 100%; }
    .caption { font-family: "Noto Sans CJK SC", sans-serif; font-weight: 300; font-size: 28px; fill: #12b9b9; }
    .num { font-family: "Liberation Serif", serif; }
    .mark { font-family: "Liberation Serif", serif; font-weight: 700; font-size: 12px; fill: #06124f; }
    .face { font-family: "Noto Sans CJK SC", sans-serif; fill: #7a7f86; }
    .winbtns { position: absolute; right: 4px; top: 8px; display: flex; gap: 7px; }
    .winbtns button { width: 11px; height: 12px; }
    .nav { position: absolute; right: 1px; top: 126px; width: 34px; height: 117px; border: 2px solid #707173; border-radius: 5px; background: rgba(178, 180, 181, 0.85); display: flex; flex-direction: column; align-items: center; justify-content: space-between; padding: 2px 1px; }
    .nav .end { align-self: flex-end; }
    .nav hr { width: 26px; border: 0; border-top: 1px solid #747678; margin: 0; }
    .vbar { display: flex; flex-direction: column; align-items: center; justify-content: space-between; padding: 5px 2px 4px 0; border-top: 1px solid #66696c; }
    .vthumb { width: 15px; height: 17px; background: #cdcdce; }
    .controls { display: flex; align-items: center; padding-left: 23px; min-width: 0; }
    .controls .scale { width: 54px; justify-content: flex-start; white-space: pre; }
    .controls .t { width: 21px; height: 18px; }
    .controls .scroll { flex: 1; display: flex; align-items: center; justify-content: center; }
    .hthumb { width: 17px; height: 15px; background: #cdcdce; }
    .grip { display: flex; align-items: flex-end; padding: 0 0 4px 6px; }
  `];

  private refPoint(dx: number, dy: number, n: string) {
    const s = "#0f8ecb";
    return svg`<g transform="translate(${dx} ${dy})" stroke=${s} stroke-width="1.100">
      <path d="M685.500 324.500L747.500 339.500V398L685.500 383.500Z" fill="#6e6e74" fill-opacity="0.350"/>
      <path d="M693.500 333.500L740.500 344.500V388.500L693.500 377.500Z" fill="#3c3c40" fill-opacity="0.450"/>
      <path d="M683 367.500L703.500 344.500L750.500 355L730 378.500Z" fill="#2a3138" fill-opacity="0.350"/>
      <path d="M705.500 351L727.500 327.500V370.500L705.500 396Z" fill="#2a3138" fill-opacity="0.350"/>
      <path d="M685.500 354.500L747.500 368.500M716.500 338V391" fill="none"/>
      <circle cx="716.500" cy="361.500" r="5.500" fill="#0f8ecb"/>
      <path d="M711 362l4 -1l1 4M718 359l2 3" stroke="#5cc4f0" fill="none"/>
      <text class="mark" x="712.500" y="337" stroke="none">${n}</text>
    </g>`;
  }

  render() {
    const g = "#0c7a14";
    const ctl = (n: string) => html`<button class="t" aria-label=${n}>${icon(n)}</button>`;
    return html`
      <div class="stage">
        <svg class="scene" viewBox="225 164 916 580" preserveAspectRatio="xMinYMin slice" fill="none">
          <text class="caption" y="255"><tspan class="num" x="281">1.</tspan><tspan x="308">分别选择连个参照点的参考面，用模型线绘制轮廓线</tspan></text>
          <path d="M410.500 174L225 379" stroke="#fff" stroke-dasharray="16 13 1 13.700" stroke-dashoffset="1.400"/>
          <path d="M410.500 174L1141 346.500" stroke="#fff" stroke-width="1.300" stroke-dasharray="25.500 19.500 1.500 19.300" stroke-dashoffset="3.600"/>
          <path d="M229.500 225V374" stroke=${g} stroke-dasharray="11.500 11.800"/>
          <path d="M802.500 164V266" stroke=${g} stroke-dasharray="11.500 11.800"/>
          <path d="M229.500 374L1014 559.500" stroke=${g} stroke-dasharray="12.500 12.900" stroke-dashoffset="21.400"/>
          <path d="M229.500 374L236 375.500" stroke=${g}/>
          <path d="M802 267L716 361.500" stroke=${g} stroke-dasharray="9 8.400"/>
          <path d="M440 667L548 547" stroke=${g} stroke-dasharray="9 8.400"/>
          ${this.refPoint(0, 0, "2")}${this.refPoint(-168, 186, "1")}
          <path d="M714 363L548 547" stroke=${g} stroke-width="1.100"/>
          <path d="M1062 263L1102 280L1122 255L1115 248Z" fill="#6f7072" fill-opacity="0.600"/>
          <path d="M1084.300 214L1117 220.500L1103.300 236L1064.700 227.700Z" fill="#c4c5c6" stroke="#999a9c"/>
          <path d="M1064.700 227.700L1103.300 236L1102 272.300L1067.300 261Z" fill="#bcbdbe" stroke="#999a9c"/>
          <path d="M1117 220.500L1103.300 236L1102 272.300L1115 254.300Z" fill="#a6a7a9" stroke="#929395"/>
          <text class="face" x="1073" y="256" font-size="20" transform="rotate(8 1083 250)">左</text>
          <text class="face" x="1085" y="228" font-size="10">上</text>
          <text class="face" x="1105" y="249" font-size="9">前</text>
        </svg>
        <div class="winbtns">
          <button aria-label="最小化"><svg width="11" height="4" viewBox="0 0 11 4"><path d="M0.500 0.500H10.500V3.500H0.500Z" fill="#fff" stroke="#4b5056"/></svg></button>
          <button aria-label="还原"><svg width="10" height="10" viewBox="0 0 10 10" fill="none"><path d="M3 2.500V1H9V7H7.500M1 3H7V9H1Z" stroke="#4b5056" stroke-width="2"/><path d="M3.500 2V1.500H8.500V6.500H8M1.500 3.500H6.500V8.500H1.500Z" stroke="#fff" stroke-width="1.300"/></svg></button>
          <button aria-label="关闭"><svg width="10" height="10" viewBox="0 0 10 10"><path d="M1 1L9 9M9 1L1 9" stroke="#4b5056" stroke-width="3.400"/><path d="M1.300 1.300L8.700 8.700M8.700 1.300L1.300 8.700" stroke="#fff" stroke-width="1.800"/></svg></button>
        </div>
        <div class="nav">
          <button class="end" aria-label="关闭导航栏"><svg width="8" height="8" viewBox="0 0 8 8"><circle cx="4" cy="4" r="3.500" fill="#8f9193" stroke="#717375"/><path d="M2.500 2.500l3 3M5.500 2.500l-3 3" stroke="#e5e5e5"/></svg></button>
          <button aria-label="控制盘"><svg width="26" height="25" viewBox="0 0 26 25" fill="none"><circle cx="11" cy="10" r="7" stroke="#7f8286" stroke-width="6"/><circle cx="11" cy="10" r="7" stroke="#d3d5d7" stroke-width="4.400"/><path d="M14.500 15.500L17 13H25V20L22 23.500H14.500ZM14.500 15.500H22V23.500M22 15.500L25 13" fill="#7fb0dc" stroke="#4b7fb0"/></svg></button>
          <button aria-label="控制盘选项">${down("#717375")}</button>
          <hr />
          <button aria-label="缩放"><svg width="17" height="17" viewBox="0 0 17 17"><rect x="0.500" y="0.500" width="10" height="10" fill="#8fb584" stroke="#6f9566"/><circle cx="10.500" cy="10.500" r="3.300" fill="#d5d7d9" stroke="#6b6e71"/><path d="M13 13L16 16" stroke="#6b6e71" stroke-width="1.600"/></svg></button>
          <button aria-label="缩放选项">${down("#717375")}</button>
          <button class="end" aria-label="导航栏选项"><svg width="8" height="8" viewBox="0 0 8 8"><circle cx="4" cy="4" r="3.500" fill="#a5a7a9" stroke="#717375"/><path d="M2 4h4" stroke="#55575a"/></svg></button>
        </div>
      </div>
      <div class="vbar">
        <button aria-label="向上滚动">${chevron("M1 7L5 3L9 7")}</button><span class="vthumb"></span><button aria-label="向下滚动">${chevron("M1 3L5 7L9 3")}</button>
      </div>
      <div class="controls">
        <button class="scale">1  :  20</button>
        ${["vDetail", "vStyle", "vSun", "vShadow", "vCrop", "vCropShow", "vLock", "vGlasses", "vBulb", "vTemp", "vAnalytic", "vDisp", "vConstr"].map(ctl)}
        <button class="t" aria-label="向左滚动">${chevron("M5 2L1.500 5L5 8")}</button>
        <span class="scroll"><span class="hthumb"></span></span>
        <button class="t" aria-label="向右滚动">${chevron("M5 2L8.500 5L5 8")}</button>
      </div>
      <div class="grip">${icon("resize")}</div>`;
  }
}

@customElement("project-browser")
class ProjectBrowser extends LitElement {
  static styles = [base, css`
    :host { display: flex; flex-direction: column; background: #eef0f4; }
    header { background: #bdcbda; height: 18px; padding-left: 4px; font-size: 13px; line-height: 18px; white-space: nowrap; }
    ul { flex: 1; margin: 3px 0 2px 1px; padding: 0; list-style: none; background: #fcfcfc; border-top: 1px solid #6e6e6e; border-left: 1px solid #6e6e6e; }
    li { display: flex; height: 20px; line-height: 20px; white-space: nowrap; }
    li button.cell { display: block; }
    .l0 { padding-left: 4px; }
    .l1 { padding-left: 8px; }
    .l2 { background: #e3e3e4; padding: 0 3px; margin-left: 5px; }
    .ic { display: flex; width: 20px; align-items: center; justify-content: center; }
  `];

  private cell(d: string, box = "", first = false) {
    const w = first ? 18 : 20;
    return html`<svg width=${w} height="20" viewBox="${20 - w} 0 ${w} 20" fill="none" overflow="visible">
      <path d=${d} stroke="#9a9a9a" stroke-dasharray="1 1"/>
      ${box ? svg`<rect x="6.500" y="6.500" width="8" height="8" rx="1" fill="#f5f6f8" stroke="#8f959c"/><path d=${box === "+" ? "M8.500 10.500h4M10.500 8.500v4" : "M8.500 10.500h4"} stroke="#2b5597"/>` : nothing}
    </svg>`;
  }

  render() {
    const tg = (d: string, s: string, first = false) => html`<button class="cell" aria-label="展开或折叠">${this.cell(d, s, first)}</button>`;
    const v = "M10.500 0V20";
    const end = "M10.500 0V10M10.500 10.500H20";
    const mid = "M10.500 0V20M10.500 10.500H26";
    return html`
      <header>项目浏览器 - 族1</header>
      <ul>
        <li>${tg("M10.500 10V20M10.500 10.500H20", "-", true)}<span class="ic">${icon("views")}</span><span class="l0">视图 (全部)</span></li>
        <li>${this.cell(v, "", true)}${tg(mid, "-")}<span class="l1">楼层平面</span></li>
        <li>${this.cell(v, "", true)}${this.cell(v)}${this.cell("M10.500 0V10M10.500 10.500H24")}<span class="l2">参照标高</span></li>
        <li>${this.cell(v, "", true)}${tg(mid, "+")}<span class="l1">天花板平面</span></li>
        <li>${this.cell(v, "", true)}${tg(mid, "+")}<span class="l1">三维视图</span></li>
        <li>${this.cell(v, "", true)}${tg("M10.500 0V10M10.500 10.500H26", "+")}<span class="l1">立面 (立面 1)</span></li>
        <li>${this.cell("M10.500 0V20M10.500 10.500H20", "", true)}<span class="ic">${icon("sheets")}</span><span class="l0">图纸 (全部)</span></li>
        <li>${tg(end, "+", true)}<span class="ic">${icon("families")}</span><span class="l0">族</span></li>
      </ul>`;
  }
}

@customElement("app-root")
class AppRoot extends LitElement {
  static styles = [base, css`
    :host { display: flex; flex-direction: column; min-height: 100vh; font: 12px/16px "Noto Sans", "Noto Sans CJK SC", sans-serif; color: #111; background: #eff0f3; }
    .options { height: 26px; background: #e5e5e6; }
    main { flex: 1; display: grid; grid-template-columns: 218px minmax(0, 1fr) 139px; column-gap: 5px; }
    .status { border-top: 2px solid #8c8d8f; height: 25px; margin-bottom: 6px; background: linear-gradient(#e3e3e4, #dcdcdd 40%, #c9cacd 80%, #d4d4d5); line-height: 22px; padding-left: 1px; white-space: nowrap; }
  `];

  render() {
    return html`
      <title-bar></title-bar>
      <ribbon-bar></ribbon-bar>
      <div class="options"></div>
      <main>
        <property-palette></property-palette>
        <model-view></model-view>
        <project-browser></project-browser>
      </main>
      <div class="status">单击可进行选择; 按 Tab 键并单击可选择其他项目; 按 Ctrl 键并单击可将新项目添加到选择集; 按 Shift 键并单击可取消选</div>`;
  }
}
